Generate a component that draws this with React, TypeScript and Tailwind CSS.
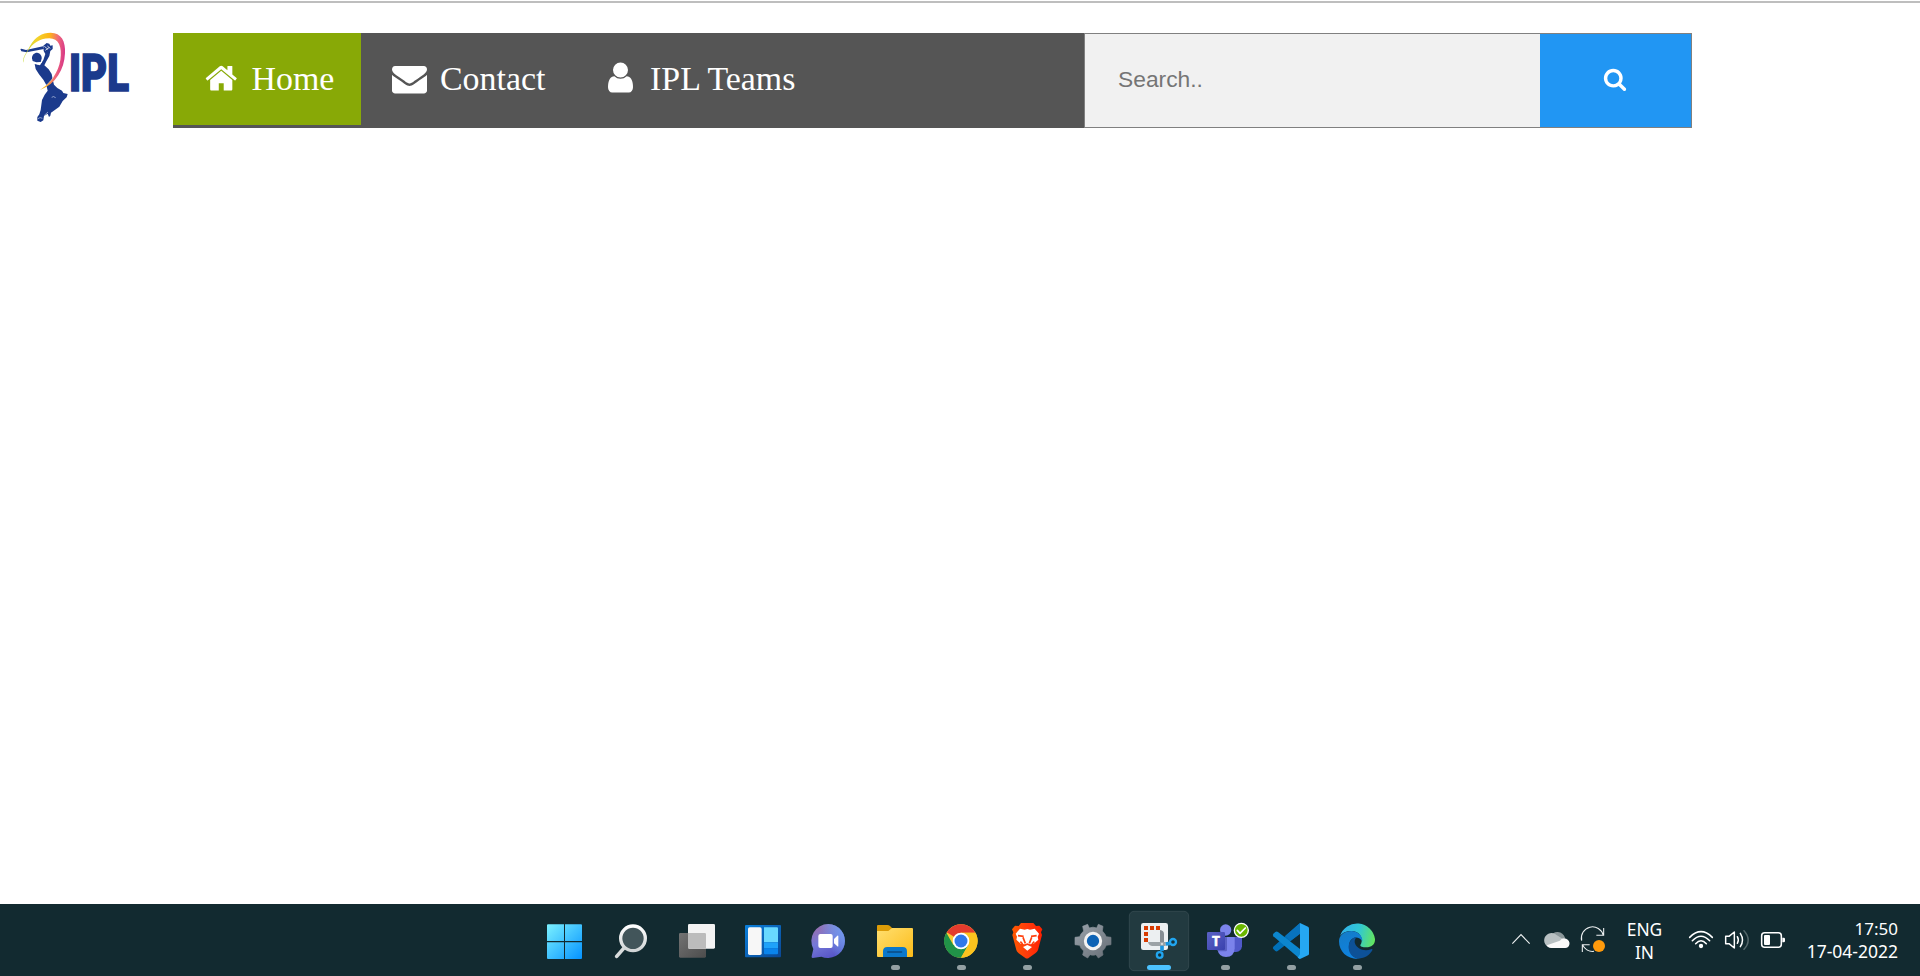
import React from "react";

const HOME =
  "M1472 992v480q0 26-19 45t-45 19h-384v-384h-256v384h-384q-26 0-45-19t-19-45v-480q0-1 .5-3t.5-3l575-474 575 474q1 2 1 6zm223-69l-62 74q-8 9-21 11h-3q-13 0-21-7l-692-577-692 577q-12 8-24 7-13-2-21-11l-62-74q-8-10-7-23.5t11-21.5l719-599q32-26 76-26t76 26l244 204v-195q0-14 9-23t23-9h192q14 0 23 9t9 23v408l219 182q10 8 11 21.5t-7 23.5z";
const ENVELOPE =
  "M1792 710v794q0 66-47 113t-113 47h-1472q-66 0-113-47t-47-113v-794q44 49 101 87 362 246 497 345 57 42 92.5 65.5t94.5 48 110 24.5h2q51 0 110-24.5t94.5-48 92.5-65.5q170-123 498-345 57-39 100-87zm0-294q0 79-49 151t-122 123q-376 261-468 325-10 7-42.5 31t-54 38.5-52 32.5-57.5 27-50 9h-2q-23 0-50-9t-57.5-27-52-32.5-54-38.5-42.5-31q-91-64-262-182.5t-205-142.5q-62-42-117-115.5t-55-136.5q0-78 41.5-130t118.5-52h1472q65 0 112.5 47t47.5 113z";
const USER =
  "M1536 1399q0 109-62.5 187t-150.5 78h-854q-88 0-150.5-78t-62.5-187q0-85 8.5-160.5t31.5-152 58.5-131 94-89 134.5-34.5q131 128 313 128t313-128q76 0 134.5 34.5t94 89 58.5 131 31.5 152 8.5 160.5zm-256-887q0 159-112.5 271.5t-271.5 112.5-271.5-112.5-112.5-271.5 112.5-271.5 271.5-112.5 271.5 112.5 112.5 271.5z";
const SEARCH =
  "M1216 832q0-185-131.5-316.5t-316.5-131.5-316.5 131.5-131.5 316.5 131.5 316.5 316.5 131.5 316.5-131.5 131.5-316.5zm512 832q0 52-38 90t-90 38q-54 0-90-38l-343-342q-179 124-399 124-143 0-273.5-55.5t-225-150-150-225-55.5-273.5 55.5-273.5 150-225 225-150 273.5-55.5 273.5 55.5 225 150 150 225 55.5 273.5q0 220-124 399l343 343q37 37 37 90z";

function Glyph({ d, className }: { d: string; className: string }) {
  return (
    <svg viewBox="0 0 1792 1792" fill="currentColor" className={className}>
      <path d={d} />
    </svg>
  );
}

function Logo() {
  return (
    <svg viewBox="0 90 519 285" className="h-[95px] w-[173px] shrink-0">
      <defs>
        <linearGradient id="ribbon" gradientUnits="userSpaceOnUse" x1="70" y1="180" x2="190" y2="190">
          <stop offset="0" stopColor="#c6dc3c" />
          <stop offset="0.3" stopColor="#f3d32c" />
          <stop offset="0.6" stopColor="#fdb515" />
          <stop offset="0.82" stopColor="#f0697a" />
          <stop offset="1" stopColor="#d93a86" />
        </linearGradient>
      </defs>
      <g fill="#1b3a8c">
        <path d="M61 147L64 146L78 150L129 139L132 147L80 157L64 154Z" />
        <path d="M130 137L140 129L148 131L151 137L158 136L158 147L151 153L148 168L139 184L133 196L146 208L155 222L158 238L162 254L172 264L186 272L190 279L203 282L200 292L188 303L178 320L153 338L151 347L147 351L143 341L132 348L130 361L122 366L112 362L112 351L118 343L122 330L126 300L134 284L143 272L139 255L130 239L117 223L107 207L104 192L120 196L130 180L136 162L131 153Z" />
        <path d="M96 175C95 165 103 158 111 158C121 159 126 168 125 176L122 186L109 187L98 183Z" />
      </g>
      <path d="M103 187L112 192L126 187M133 139L144 148M142 138L151 145M136 151L147 143" fill="none" stroke="#fff" strokeWidth="2.2" />
      <path d="M155 292Q160 287 167 293M114 356Q120 350 127 355M133 346L144 336" fill="none" stroke="#dbe2f3" strokeWidth="1.8" />
      <path
        d="M70 188C66 176 78 160 90 138C106 110 126 98 152 98C184 98 197 124 195 160C193 208 168 252 120 270C154 248 175 216 181 180C187 140 176 115 148 115C116 115 98 132 84 152C76 164 70 174 70 188Z"
        fill="url(#ribbon)"
      />
      <path d="M134 259C145 251 153 242 160 232" fill="none" stroke="#fff" strokeWidth="1.3" />
      <g
        fill="#1b3a8c"
        stroke="#1b3a8c"
        strokeWidth="5"
        fontFamily="Roboto, 'Liberation Sans', sans-serif"
        fontWeight="900"
        fontSize="158"
      >
        <text x="207" y="274" textLength="180" lengthAdjust="spacingAndGlyphs">
          IPL
        </text>
      </g>
    </svg>
  );
}

function Cell({ x, children, running, active }: { x: number; children: React.ReactNode; running?: boolean; active?: boolean }) {
  return (
    <svg viewBox={`${x} 27 198 216`} className="h-[72px] w-[66px] shrink-0">
      {active && <rect x={x + 10} y="49" width="178" height="178" rx="14" fill="#223a40" stroke="#354b50" strokeWidth="2.5" />}
      {children}
      {running && <rect x={x + 87} y="210" width="27" height="15" rx="7.5" fill="#93a0a3" />}
    </svg>
  );
}

function Taskbar() {
  return (
    <footer className="flex h-[72px] shrink-0 items-center bg-[#122a30] pl-[532px] pr-[22px]">
      <svg className="absolute h-0 w-0">
        <defs>
          <linearGradient id="win" gradientUnits="userSpaceOnUse" x1="51" y1="88" x2="155" y2="192">
            <stop offset="0" stopColor="#7bf1ff" />
            <stop offset="1" stopColor="#0593ff" />
          </linearGradient>
          <linearGradient id="handle" x1="0" y1="0" x2="0" y2="1">
            <stop offset="0" stopColor="#fff" />
            <stop offset="1" stopColor="#d0d4d5" />
          </linearGradient>
          <linearGradient id="grey" x1="0" y1="0" x2="1" y2="1">
            <stop offset="0" stopColor="#737373" />
            <stop offset="1" stopColor="#4c4c4c" />
          </linearGradient>
          <linearGradient id="blue" x1="0" y1="0" x2="1" y2="1">
            <stop offset="0" stopColor="#0a80dc" />
            <stop offset="1" stopColor="#0b4794" />
          </linearGradient>
          <linearGradient id="chat" gradientUnits="userSpaceOnUse" x1="80" y1="95" x2="125" y2="190">
            <stop offset="0" stopColor="#976fae" />
            <stop offset="0.45" stopColor="#7579d8" />
            <stop offset="1" stopColor="#5553c7" />
          </linearGradient>
          <linearGradient id="chatb" gradientUnits="userSpaceOnUse" x1="110" y1="140" x2="165" y2="110">
            <stop offset="0" stopColor="#6da2f3" stopOpacity="0" />
            <stop offset="1" stopColor="#7199ee" />
          </linearGradient>
          <linearGradient id="folder" x1="0" y1="0" x2="1" y2="1">
            <stop offset="0" stopColor="#ffdf70" />
            <stop offset="1" stopColor="#fcbc19" />
          </linearGradient>
          <linearGradient id="brave" x1="0" y1="0" x2="1" y2="0">
            <stop offset="0" stopColor="#ff5a00" />
            <stop offset="0.5" stopColor="#ff3b0c" />
            <stop offset="1" stopColor="#ff2000" />
          </linearGradient>
          <linearGradient id="gear" x1="0" y1="0" x2="1" y2="1">
            <stop offset="0" stopColor="#9aa3ab" />
            <stop offset="1" stopColor="#666d75" />
          </linearGradient>
          <linearGradient id="teams" x1="0" y1="0" x2="1" y2="1">
            <stop offset="0" stopColor="#5b62c6" />
            <stop offset="1" stopColor="#3a41ad" />
          </linearGradient>
          <linearGradient id="edgeTop" gradientUnits="userSpaceOnUse" x1="452" y1="110" x2="555" y2="135">
            <stop offset="0" stopColor="#30b2ed" />
            <stop offset="0.5" stopColor="#31c8d3" />
            <stop offset="1" stopColor="#65e65b" />
          </linearGradient>
          <linearGradient id="edgeBlue" gradientUnits="userSpaceOnUse" x1="460" y1="110" x2="505" y2="190">
            <stop offset="0" stopColor="#147cc8" />
            <stop offset="1" stopColor="#0d83e4" />
          </linearGradient>
        </defs>
      </svg>

      <Cell x={6}>
        <path d="M54 88H102V138H51V91Q51 88 54 88ZM105 88H153Q156 88 156 91V138H105ZM51 142H102V192H54Q51 192 51 189ZM105 142H156V189Q156 192 153 192H105Z" fill="url(#win)" />
      </Cell>
      <Cell x={204}>
        <path d="M281 160L260 184" stroke="#d8dcdc" strokeWidth="11" strokeLinecap="round" />
        <circle cx="309" cy="130" r="37" fill="#42555a" stroke="url(#handle)" strokeWidth="10" />
      </Cell>
      <Cell x={402}>
        <rect x="447" y="114" width="81" height="74" rx="4" fill="url(#grey)" />
        <rect x="474" y="87" width="81" height="74" rx="4" fill="#f3f3f3" />
        <path d="M474 114H524Q528 114 528 118V161H478Q474 161 474 157Z" fill="#bcbcbc" />
      </Cell>
      <Cell x={600}>
        <rect x="645" y="90" width="108" height="97" rx="3" fill="url(#blue)" />
        <rect x="654" y="97" width="41" height="83" rx="5" fill="#f7f7f7" />
        <path d="M702 97H741Q744 97 744 100V142H702Z" fill="#69d9ff" />
        <path d="M702 142H744V160H702Z" fill="#1fa2fa" />
        <path d="M702 160H744V175Q744 178 741 178H705Q702 178 702 175Z" fill="#0a84ec" />
      </Cell>
      <Cell x={18}>
        <path d="M115 87A51 51 0 1 1 94 185L68 189Q64 189 65 184L70 162A51 51 0 0 1 115 87Z" fill="url(#chat)" />
        <path d="M115 87A51 51 0 1 1 94 185L68 189Q64 189 65 184L70 162A51 51 0 0 1 115 87Z" fill="url(#chatb)" />
        <rect x="85" y="117" width="43" height="42" rx="6" fill="#fff" />
        <path d="M132 132L142 122Q145 120 145 124V152Q145 157 142 154L132 145Z" fill="#fff" />
      </Cell>
      <Cell x={216} running>
        <path d="M261 93Q261 90 264 90H292Q297 90 300 93L310 103V125H261Z" fill="#dc9c07" />
        <path d="M261 108H295L306 99H366Q369 99 369 102V183Q369 186 366 186H264Q261 186 261 183Z" fill="url(#folder)" />
        <path d="M279 186V169Q279 156 292 156H338Q351 156 351 169V186Z" fill="#0b78cb" />
        <path d="M293 171H335" stroke="#0b4a82" strokeWidth="4" strokeLinecap="round" />
      </Cell>
      <Cell x={414} running>
        <circle cx="513" cy="138" r="50" fill="#fcc934" />
        <path d="M513 138L470 112A50 50 0 0 1 556 113H513Z" fill="#e33b2e" />
        <path d="M469 113A50 50 0 0 0 513 188L535 150L513 138L490 150Z" fill="#219348" />
        <path d="M513 188L535 150L532 126L513 113H556A50 50 0 0 1 513 188Z" fill="#fcc31e" />
        <circle cx="513" cy="138" r="25" fill="#fff" />
        <circle cx="513" cy="138" r="19.5" fill="#3078ea" />
      </Cell>
      <Cell x={612} running>
        <path d="M693 84H730L738 93L748 92L757 103L753 112L756 120L744 165Q742 171 736 175L717 188Q711 193 705 188L686 175Q681 171 679 165L667 120L670 112L666 103L675 92L686 93Z" fill="url(#brave)" />
        <path d="M690 101L704 104L712 102L720 104L734 101L747 116L743 125L745 134L731 146L720 148L712 145L704 148L692 146L679 134L681 125L677 116Z" fill="#fff" />
        <path d="M699 156L712 150L726 156L712 167Z" fill="#fff" />
        <path d="M684 122L701 124M740 122L723 124M699 127L706 145M725 127L718 145M691 140L698 147M733 140L726 147" fill="none" stroke="#ff4210" strokeWidth="5" />
      </Cell>
      <Cell x={30}>
        <path d="M113 88L118 99Q129 94 140 99L145 88L159 94L157 108Q165 116 169 125L183 127V149L169 151Q165 162 157 168L159 180L145 189L138 179Q129 182 120 179L113 189L98 180L101 168Q92 161 89 151L75 149V127L89 125Q92 116 101 108L98 94Z" fill="url(#gear)" stroke="url(#gear)" strokeWidth="2" strokeLinejoin="round" />
        <circle cx="129" cy="138" r="23" fill="#0d63b5" stroke="#f2f2f2" strokeWidth="9" />
      </Cell>
      <Cell x={228} active>
        <rect x="273" y="84" width="81" height="81" rx="7" fill="#eceff1" />
        <path d="M282 93H294V105H282ZM300 93H312V105H300ZM318 93H330V105H318ZM282 111H294V123H282ZM282 129H294V141H282Z" fill="#d83b01" />
        <path d="M330 105Q342 107 342 117V152H330Z" fill="#868d93" />
        <path d="M294 141H347V153H306Q296 151 294 141Z" fill="#9ca2a6" />
        <path d="M336 152V168M347 147L360 145" stroke="#1994df" strokeWidth="11" />
        <circle cx="369" cy="141" r="9" fill="#16323c" stroke="#21a5ef" strokeWidth="7" />
        <circle cx="329" cy="180" r="8.5" fill="#16323c" stroke="#21a5ef" strokeWidth="7" />
        <circle cx="336" cy="147" r="3.5" fill="#d8dcdd" />
        <rect x="291" y="210" width="72" height="15" rx="7.5" fill="#4cc2ff" />
      </Cell>
      <Cell x={6} running>
        <circle cx="107" cy="105" r="17" fill="#7b83eb" />
        <circle cx="145" cy="112" r="12" fill="#5059c9" />
        <path d="M128 126H156V154Q154 170 138 171H128Z" fill="#5059c9" />
        <path d="M84 126H134V160Q133 186 108 186Q87 186 83 166Z" fill="#7b83eb" />
        <path d="M84 126H111V165Q111 169 107 169H84Z" fill="#5a61c4" />
        <rect x="51" y="111" width="54" height="54" rx="4" fill="url(#teams)" />
        <text x="78" y="152" textAnchor="middle" fontFamily="'Open Sans', sans-serif" fontWeight="700" fontSize="41" fill="#fff" stroke="#fff" strokeWidth="1.5">T</text>
        <circle cx="154" cy="106" r="21" fill="#6bb700" stroke="#fff" strokeWidth="4" />
        <path d="M142 106L150 115L166 99" fill="none" stroke="#fff" strokeWidth="5" strokeLinecap="round" strokeLinejoin="round" />
      </Cell>
      <Cell x={204} running>
        <path d="M330 84L250 155Q247 159 250 162L256 168Q260 171 264 167L330 116Z" fill="#0070b8" />
        <path d="M330 192L250 124Q247 120 250 116L256 111Q260 108 264 111L330 162Z" fill="#0c86ce" />
        <path d="M330 84L286 122L301 138L330 116Z" fill="#0873bd" />
        <path d="M330 84L354 95Q357 97 357 101V176Q357 179 354 181L330 192L323 188L330 178Z" fill="#25a7f2" />
      </Cell>
      <Cell x={402} running>
        <path d="M450 123A54 54 0 0 1 555 132C556 149 543 157 529 157C518 157 510 155 511 150C520 139 516 113 490 108C470 107 457 113 450 123Z" fill="url(#edgeTop)" />
        <path d="M447 139C447 120 465 108 484 108C505 109 518 124 517 138C510 126 489 121 480 139C471 162 482 185 505 192C472 193 447 170 447 139Z" fill="url(#edgeBlue)" />
        <path d="M496 126C479 134 475 149 476 160C478 177 488 189 505 191C526 190 540 179 547 166C548 163 546 161 543 163C522 171 502 161 496 148C492 139 494 133 500 126Z" fill="#0d5197" />
      </Cell>

      <div className="ml-auto flex h-full items-center">
        <svg viewBox="30 27 120 216" className="h-[72px] w-[40px]">
          <path d="M67 146L93 119L119 146" fill="none" stroke="#eef1f2" strokeWidth="3.4" />
        </svg>
        <svg viewBox="150 27 108 216" className="h-[72px] w-9">
          <g transform="translate(1.5 0)">
            <path d="M181 125Q187 110 202 111Q218 112 224 129L205 145Z" fill="#8b979a" />
            <path d="M181 158A22 22 0 1 1 198 120L226 137L190 158Z" fill="#b9c1c3" />
            <path d="M169 151L208 137Q216 127 227 131Q238 136 237 147Q235 159 224 159H183Q172 159 169 151Z" fill="#fafafa" />
          </g>
        </svg>
        <svg viewBox="258 27 108 216" className="h-[72px] w-9">
          <path d="M275 137A33 33 0 0 1 340 121M341 99V121H319M277 171V149H299M278 150A33 33 0 0 0 312 169" fill="none" stroke="#eef1f2" strokeWidth="3.2" />
          <circle cx="327" cy="153" r="18" fill="#ff9a0c" />
        </svg>
        <div className="w-[65px] pt-px text-center text-[17.4px] leading-[23px]">
          <div>ENG</div>
          <div>IN</div>
        </div>
        <svg viewBox="-9 27 123 216" className="h-[72px] w-[41px]">
          <g fill="none" stroke="#fff" strokeWidth="4.6" strokeLinecap="round">
            <path d="M29 127Q63 93 97 127" />
            <path d="M37 137Q63 110 89 137" />
            <path d="M47 146Q63 128 79 146" />
          </g>
          <circle cx="63" cy="153" r="6.5" fill="#fff" />
        </svg>
        <svg viewBox="114 27 108 216" className="h-[72px] w-9">
          <g fill="none" stroke="#fff" strokeWidth="4.4" strokeLinecap="round" strokeLinejoin="round">
            <path d="M137 124H147L163 111V159L147 146H137Z" />
            <path d="M172 125Q178 135 172 145" />
            <path d="M181 115Q194 135 181 155" />
            <path d="M192 107Q217 135 192 163" stroke="#53666a" />
          </g>
        </svg>
        <svg viewBox="222 27 108 216" className="h-[72px] w-9">
          <rect x="245" y="113" width="59" height="44" rx="9" fill="none" stroke="#fff" strokeWidth="4.6" />
          <rect x="252" y="120" width="18" height="30" rx="3" fill="#fff" />
          <path d="M307 128H311Q315 128 315 132V138Q315 142 311 142H307Z" fill="#fff" />
        </svg>
        <div className="w-[108px] text-right text-[17.5px] leading-[23px]">
          <div className="text-[17px]">17:50</div>
          <div>17-04-2022</div>
        </div>
      </div>
    </footer>
  );
}

export default function App() {
  return (
    <div className="flex h-[976px] w-[1920px] flex-col overflow-hidden bg-white font-['Noto_Sans','Open_Sans',sans-serif] text-white">
      <div className="mt-px h-[2px] shrink-0 bg-[#bebebe]" />
      <main className="flex flex-1 items-start pt-[27px]">
        <Logo />
        <nav className="mt-[3px] flex h-[95px] w-[1519px] bg-[#555555] font-['Liberation_Serif',serif] text-[33.9px] leading-[92px]">
          <a className="flex h-[92px] w-[188px] bg-[#88a906] pl-[31px]">
            <Glyph d={HOME} className="mt-[27.5px] h-[34.5px] w-[34.5px]" />
            <span className="ml-[13px]">Home</span>
          </a>
          <a className="flex h-[92px] w-[216px] pl-[31px]">
            <Glyph d={ENVELOPE} className="mt-[27.5px] h-[35px] w-[35px]" />
            <span className="ml-[13px]">Contact</span>
          </a>
          <a className="flex h-[92px] pl-[26px]">
            <Glyph d={USER} className="mt-[27px] h-[35px] w-[35px]" />
            <span className="ml-[12px]">IPL Teams</span>
          </a>
          <form className="ml-auto flex h-[95px] w-[608px] border border-[#808080] font-['Liberation_Sans',sans-serif]">
            <input
              type="text"
              placeholder="Search.."
              className="h-full w-[455px] bg-[#f1f1f1] pb-[2px] pl-[33px] text-[22.8px] text-[#333] outline-none placeholder:text-[#757575]"
            />
            <button type="button" className="flex flex-1 bg-[#2196f3] pl-[63px] pt-[33px]">
              <Glyph d={SEARCH} className="h-6 w-6" />
            </button>
          </form>
        </nav>
      </main>
      <Taskbar />
    </div>
  );
}
